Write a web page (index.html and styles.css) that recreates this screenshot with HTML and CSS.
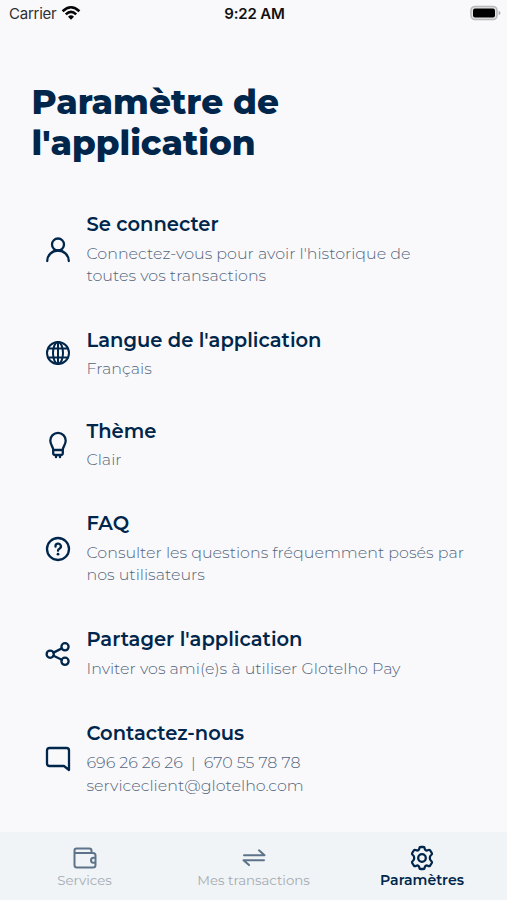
FILE: index.html
```html
<!DOCTYPE html>
<html lang="fr">
<head>
<meta charset="utf-8">
<title>Paramètre de l'application</title>
<link rel="stylesheet" href="styles.css">
</head>
<body>
<div class="screen">
  <header class="status">
    <div class="carrier"><span>Carrier</span>
      <svg width="20" height="16" viewBox="0 0 20 16"><g fill="none" stroke="#050505" stroke-width="2.6"><path d="M1.6 6.2Q10-1.7 18.4 6.2"/><path d="M4.8 9.4Q10 4.4 15.2 9.4"/></g><path d="M7 11.7Q10 9 13 11.7L10 14.8Z" fill="#050505"/></svg>
    </div>
    <div class="clock">9:22 AM</div>
    <svg class="battery" width="31" height="16" viewBox="0 0 31 16"><rect x="1" y="1.5" width="26" height="13" rx="4" fill="#e4e4e6" stroke="#b9b9bb" stroke-width="1.6"/><rect x="3" y="3.6" width="22" height="8.9" rx="2" fill="#000"/><path d="M28.7 5.7Q30.5 6.5 30.5 8T28.7 10.3Z" fill="#aaa"/></svg>
  </header>
  <h1>Paramètre de<br>l'application</h1>
  <main class="list">
    <section class="item two">
      <svg class="icon" viewBox="0 0 26 26"><circle cx="13" cy="7.5" r="6"/><path d="M2.2 24a10.8 10.5 0 0 1 21.6 0"/></svg>
      <div><h2>Se connecter</h2><p>Connectez-vous pour avoir l'historique de<br>toutes vos transactions</p></div>
    </section>
    <section class="item language">
      <svg class="icon" viewBox="0 0 26 26"><g stroke-width="2"><circle cx="13" cy="13" r="11"/><ellipse cx="13" cy="13" rx="5" ry="11"/><path d="M13 2v22M3.2 8.6h19.6M3.2 17.4h19.6"/></g></svg>
      <div><h2>Langue de l'application</h2><p>Français</p></div>
    </section>
    <section class="item">
      <svg class="icon" viewBox="0 0 26 26"><path d="M8.2 18C8.2 14.5 5.3 13 5.3 8.6a7.7 7.7 0 0 1 15.4 0c0 4.4-2.9 5.9-2.9 9.4ZM8.2 18v3q0 2 2 2h5.6q2 0 2-2v-3M11 23v2.2M15 23v2.2"/></svg>
      <div><h2>Thème</h2><p>Clair</p></div>
    </section>
    <section class="item two">
      <svg class="icon" viewBox="0 0 26 26"><circle cx="13" cy="13" r="11"/><path d="M10.5 10.6A2.7 2.7 0 1 1 14.4 12.8Q13 13.5 13 14.8"/><circle cx="13" cy="18.2" r="1.4" class="dot"/></svg>
      <div><h2>FAQ</h2><p>Consulter les questions fréquemment posés par<br>nos utilisateurs</p></div>
    </section>
    <section class="item share">
      <svg class="icon" viewBox="0 0 26 26"><circle cx="5.2" cy="13.2" r="3.6"/><circle cx="20" cy="5.8" r="3.6"/><circle cx="20" cy="20.3" r="3.6"/><path d="M8.5 11.6L16.8 7.4M8.5 14.8L16.8 18.7"/></svg>
      <div><h2>Partager l'application</h2><p>Inviter vos ami(e)s à utiliser Glotelho Pay</p></div>
    </section>
    <section class="item contact">
      <svg class="icon" viewBox="0 0 26 26"><path d="M24 24L19 20H4.5Q2 20 2 17.5V4.5Q2 2 4.5 2H21.5Q24 2 24 4.5Z"/></svg>
      <div><h2>Contactez-nous</h2><p>696 26 26 26&nbsp; |&nbsp; 670 55 78 78<br>serviceclient@glotelho.com</p></div>
    </section>
  </main>
  <nav class="tabs">
    <a class="tab"><svg width="26" height="26" viewBox="0 0 26 26"><path d="M19.5 8V5.700Q19.5 3.500 17.3 3.500H4.500Q2.500 3.500 2.500 5.700V20Q2.500 22.500 5 22.500H21Q23.500 22.500 23.500 20V10.500Q23.500 8 21 8H3M23.500 12.700H21.500a2.500 2.500 0 0 0 0 5H23.500"/></svg><span>Services</span></a>
    <a class="tab"><svg width="26" height="26" viewBox="0 0 26 26"><path d="M3 10.2H23.5L18 5.3M23 15.2H2.5L8 20.1"/></svg><span>Mes transactions</span></a>
    <a class="tab active"><svg width="26" height="26" viewBox="0 0 26 26"><path d="M10.4 3.200Q10.500 2 11.700 2H14.300Q15.500 2 15.600 3.200C15.800 5.300 17.300 5.900 18.700 5.200Q20.300 4.300 21.200 5.500L22.800 8Q23.400 9.100 22.300 9.900C20.300 11.200 20.300 14.800 22.300 16.100Q23.400 16.900 22.800 18L21.200 20.500Q20.300 21.700 18.700 20.800C17.300 20.100 15.800 20.700 15.600 22.800Q15.500 24 14.300 24H11.700Q10.500 24 10.400 22.800C10.200 20.700 8.700 20.100 7.300 20.800Q5.700 21.700 4.800 20.500L3.200 18Q2.600 16.900 3.700 16.100C5.700 14.800 5.700 11.200 3.700 9.900Q2.600 9.100 3.200 8L4.800 5.500Q5.700 4.300 7.300 5.200C8.700 5.900 10.200 5.300 10.400 3.200Z"/><circle cx="13" cy="13" r="3.800"/></svg><span>Paramètres</span></a>
  </nav>
</div>
</body>
</html>
```
FILE: styles.css
```css
* { box-sizing: border-box; }
body { margin: 0; background: #f9f9fc; color: #00264b; font-family: Montserrat, Inter, "Open Sans", sans-serif; }
.screen { height: 900px; display: flex; flex-direction: column; overflow: hidden; }
.status { height: 28px; flex: none; display: grid; grid-template-columns: 1fr auto 1fr; align-items: center; padding: 0 7px 0 9px; color: #303030; font: 15px/28px Inter, sans-serif; }
.carrier { display: flex; align-items: center; gap: 5px; letter-spacing: -0.25px; }
.carrier svg { margin-top: -2px; }
.clock { font-weight: 600; color: #111; letter-spacing: -0.15px; }
.battery { justify-self: end; margin: -2px -1px 0 0; }
h1 { margin: 54px 0 0 31.5px; font-size: 34.2px; font-weight: 800; line-height: 41px; white-space: nowrap; }
h2 { margin: 0 0 6px; font-size: 19.5px; font-weight: 600; line-height: 24px; white-space: nowrap; }
p { margin: 0; font-size: 15.9px; font-weight: 300; line-height: 22px; color: #53657b; white-space: nowrap; }
.list { padding: 48px 0 0 44.5px; flex: 1; }
.item { display: flex; align-items: center; gap: 16px; height: 51px; margin-bottom: 41px; }
.item.language { margin-bottom: 40px; }
.item.two { height: 74px; margin-bottom: 42px; }
.item.two h2, .item.share h2 { margin-bottom: 7px; }
.item.share { height: 52px; margin-bottom: 42px; }
.item.contact { height: 76px; margin: 0; }
.contact p { line-height: 23px; }
.icon { width: 26px; height: 26px; flex: none; overflow: visible; }
.item.language .icon { margin-bottom: 2px; }
.item.two .icon, .item.share .icon { margin-top: 2px; }
svg.icon, .tab svg { fill: none; stroke: #00264b; stroke-width: 2.3; stroke-linecap: round; stroke-linejoin: round; }
.icon .dot { fill: #00264b; stroke: none; }
.tabs { height: 68px; flex: none; background: #f1f4f6; display: grid; grid-template-columns: repeat(3, 1fr); }
.tab { display: flex; flex-direction: column; align-items: center; padding-top: 13px; font-size: 13.3px; line-height: 18px; color: #a3abb4; }
.tab svg { stroke: #5c7389; stroke-width: 2; }
.tab.active { color: #00264b; font-weight: 600; font-size: 14.1px; padding-right: 1px; }
.tab.active svg { stroke: #00264b; stroke-width: 2.3; }
```
